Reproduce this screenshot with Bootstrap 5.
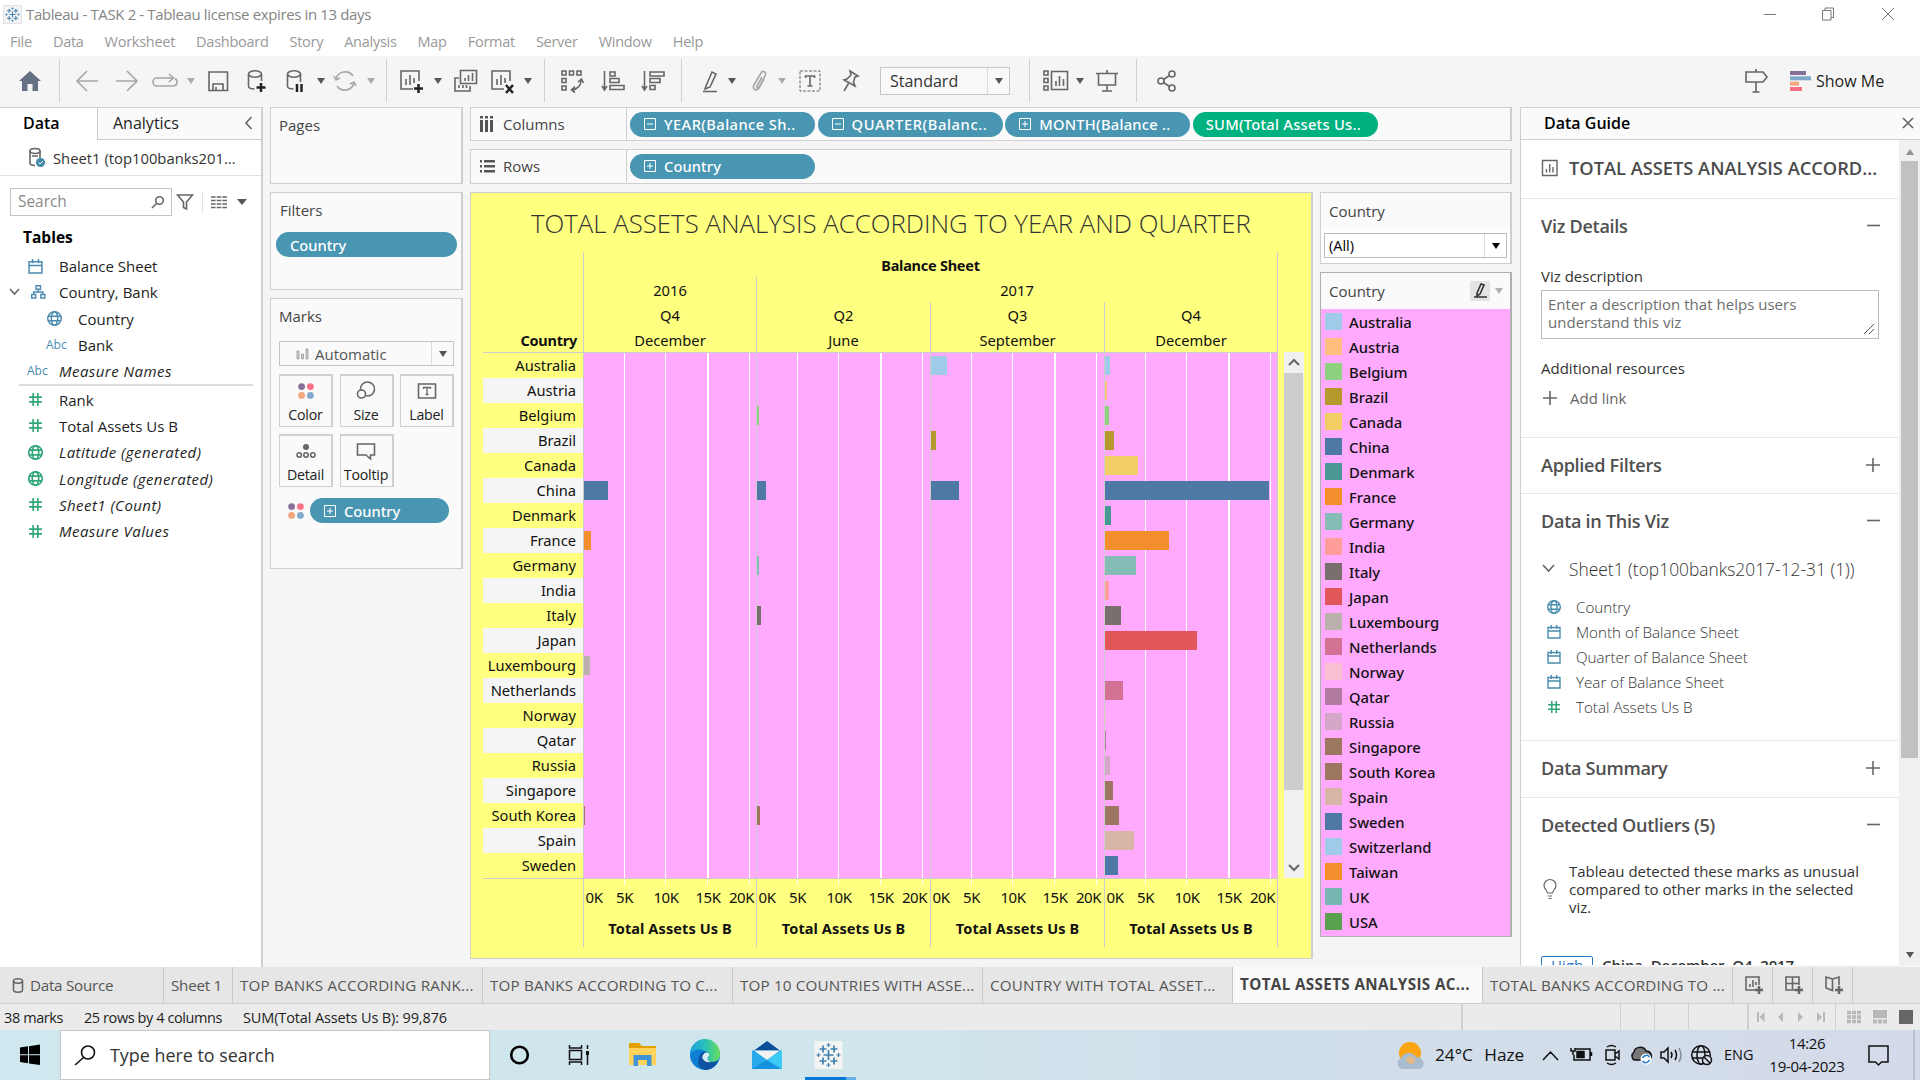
<!DOCTYPE html>
<html lang="en">
<head>
<meta charset="utf-8">
<title>Tableau - TASK 2</title>
<link rel="stylesheet" href="https://cdn.jsdelivr.net/npm/bootstrap@5.3.0/dist/css/bootstrap.min.css">
<script src="https://cdn.jsdelivr.net/npm/bootstrap@5.3.0/dist/js/bootstrap.bundle.min.js"></script>
<style>
body{width:1920px;height:1080px;overflow:hidden;background:#f5f5f5;font-family:"Open Sans","Noto Sans",sans-serif;font-size:15px;line-height:18px;color:#1e1e1e}
svg{display:block;flex:none;overflow:visible}
.ln{fill:none;stroke:#666;stroke-width:1.6}
.ttl{height:28px;color:#858585;font-size:15px;letter-spacing:-.37px;padding-left:3px}
.menubar{height:28px;color:#999;font-size:14.5px;padding:0 0 0 10px;gap:21px;letter-spacing:-.27px}
.tools{height:51px;background:#f5f5f5;display:grid;padding:0 0 2px 8px;align-items:center;justify-items:center;
grid-template-columns:44px 15px 40px 40px 36px 16px 38px 40px 36px 16px 32px 20px 11px 38px 16px 38px 36px 16px 16px 40px 41px 40px 16px 35px 20px 30px 16px 40px 40px 150px 19px 34px 14px 40px 18px 42px 1fr 40px 144px}
.tools>i{width:1px;height:43px;background:#d0d0d0}
.car{width:0;height:0;border:4px solid transparent;border-top:6px solid #555;border-bottom:0;display:block}
.pale{opacity:.45}
.stdbox{width:130px;height:28px;border:1px solid #c6c6c6;background:#f9f9f9;font-size:16px;color:#333;padding-left:9px}
.cut{border-left:1px solid #dcdcdc;height:100%;width:22px}
.main{height:860px}
.left{width:263px;background:#fff;border-right:2px solid #cfcfcf;border-top:1px solid #cfcfcf}
.tabrow{height:32px;font-size:16px}
.tabrow>div{padding-bottom:2px}
.tabrow>.t1{width:97px;padding-left:23px;font-weight:600;color:#000}
.tabrow>.t2{background:#fafafa;border-left:1px solid #ccc;border-bottom:1px solid #ccc;padding:0 9px 1px 15px}
.dsrow{height:36px;border-bottom:1px solid #e0e0e0;padding-left:29px;gap:8px;font-size:14.8px;color:#333}
.srow{height:52px;padding-left:10px}
.sbox{width:162px;height:28px;border:1px solid #c4c4c4;padding:0 7px 0 7px;color:#8a8a8a;font-size:15.4px}
.fld{height:26.3px;gap:0;color:#1e1e1e}
.fld>.ic{width:59px;padding-left:28px;display:flex}
.fld.sub>.ic{width:78px;padding-left:47px}
.fld>.fst-italic{letter-spacing:.45px}
.abc{font-size:12px;color:#4a8cae;margin-left:-1px}
.bl{stroke:#4a8cae;fill:none;stroke-width:1.4}
.gr{stroke:#2fa678;fill:none;stroke-width:1.5}
.mid{width:193px;margin-left:7px}
.box1{background:#fafafa;border:1px solid #cfcfcf;border-right-width:2px;color:#444}
.pill{background:#4996b2;color:#fff;border-radius:13px;height:25px;font-family:"Noto Sans";font-weight:500;font-size:14.7px;display:flex;align-items:center;white-space:nowrap}
.s1{letter-spacing:.1px}.s2{letter-spacing:.25px}.s3{letter-spacing:.42px}.s4{letter-spacing:.6px}
.mbtn{width:54px;height:53px;border:1px solid #cfcfcf;border-right-width:2px;border-top-width:2px;color:#222;display:flex;flex-direction:column;align-items:center;padding-top:5px;font-size:14.2px;letter-spacing:-.2px}
.mbtn svg{margin-bottom:5px}
.auto{width:175px;height:25px;border:1px solid #c6c6c6;color:#555;background:#fafafa}
.shelves{width:1042px;margin-left:7px}
.shelf{height:34px;display:flex;align-items:center}
.shelf>.lab{width:156px;height:100%;border-right:1px solid #cfcfcf;padding-left:9px;gap:10px}
.shelf .pill{width:185px;padding-left:14px;gap:8px;margin-left:3px}
.shelf .pill+.pill{margin-left:2.6px}
.viz{width:843px;height:767px;background:#ffff80;border:1px solid #cfcfcf;border-right-width:2px;font-family:"Noto Sans";color:#111;padding:0 33px 0 12px;position:relative}
.viz h1{font-family:"Open Sans";font-weight:300;font-size:25.8px;line-height:61px;height:59px;margin:0 -33px 0 -12px;text-align:center;color:#333;white-space:nowrap}
.vgrid{display:grid;grid-template-columns:100px 173px 174px 174px 174px;font-size:14.7px;text-align:center}
.vhead{grid-auto-rows:25px;line-height:27px}
.hd{border-left:1px solid #ccc}
.hr1{border-right:1px solid #ccc}
.vbody{height:526px;border-top:1px solid #ccc}
.names>div{height:25px;text-align:right;padding-right:7px;line-height:24px;font-size:14.7px}
.names>div:nth-child(even){background:#f5f5f5}
.pane{background-color:#ffaaff;border-left:1px solid #ccc;background-image:linear-gradient(90deg,transparent 40px,#fff 40px,#fff 41px,transparent 41px,transparent 81px,#fff 81px,#fff 82px,transparent 82px,transparent 123px,#fff 123px,#fff 125px,transparent 125px,transparent 165px,#fff 165px,#fff 166px,transparent 166px)}
.pane>div{height:25px;padding-top:3px}
.pane>div>div{height:19px}
.axis{border-left:1px solid #ccc;border-top:1px solid #ccc;height:69px}
.axis:last-child,.pane:last-child{border-right:1px solid #ccc}
.ticks{height:40px;font-size:15px;line-height:37px;display:grid;grid-template-columns:20px 41px 42px 42px 25px;letter-spacing:-.4px;background:linear-gradient(#fff,#fff) 40px 0/1px 6px no-repeat,linear-gradient(#fff,#fff) 81px 0/1px 6px no-repeat,linear-gradient(#fff,#fff) 123px 0/1px 6px no-repeat,linear-gradient(#fff,#fff) 165px 0/1px 6px no-repeat}
.ticks>span{display:flex;justify-content:center}
.vb{font-weight:700;font-size:14.5px;letter-spacing:-.25px}
.axis .vb{letter-spacing:.1px}
.vsb{position:absolute;left:813px;top:159px;width:20px;height:526px;background:#f0f0f0}
.vsb>div{height:417px;background:#cdcdcd;margin-right:1px}
.rcards{width:192px;margin-left:7px}
.lg{background:#ffaaff;padding:0 0 0 4px;font-family:"Noto Sans";font-weight:500;color:#111;font-size:14.8px}
.lg>div{height:25px;display:flex;align-items:center;gap:7px}
.lg i{width:17px;height:17px;margin-top:-1px}
.guide{width:400px;margin-left:8px;border-left:1px solid #cfcfcf;border-top:1px solid #cfcfcf;border-bottom:2px solid #f5f5f5;background:#fff;color:#333}
.ghead{height:32px;background:#fafafa;border-bottom:1px solid #cfcfcf;padding:0 7px 2px 23px;font-size:16px;font-weight:600;color:#000}
.gbody{width:378px;overflow:hidden}
.gsec{border-bottom:1px solid #e8e8e8;padding:0 19px 0 20px}
.gh{height:55px;padding-bottom:2px;font-size:18.1px;font-weight:600;color:#505050;display:flex;align-items:center;justify-content:space-between;letter-spacing:-.3px}
.gi{height:25px;display:flex;align-items:center;gap:15px;padding-left:6px;color:#333;font-weight:300;font-size:15.2px}
.gsb{width:21px;background:#f0f0f0}
.strip{height:37px;background:#e6e6e6;border-bottom:1px solid #cfcfcf;color:#555;font-size:15.2px}
.strip>div{border-right:1px solid #c8c8c8;display:flex;align-items:center;padding-left:7px;white-space:nowrap;letter-spacing:-.25px}
.strip>.wd{width:250px;letter-spacing:.17px}
.strip>.act{letter-spacing:.38px;background:#fafafa;color:#444;padding-bottom:2px}
.strip>.ico{width:40px;padding-left:12px}
.stat{height:26px;background:#ebebeb;font-size:14.5px}
.stat span{padding-top:2px}
.stat i{width:2px;height:26px;background:#d0d0d0}
.task{height:50px;background:linear-gradient(90deg,#cfe7ee 0,#d0e5ec 45%,#d0dfea 65%,#d4dae9 100%);color:#111;font-size:17.9px}
.tsearch{width:430px;height:50px;background:#fff;border:1px solid #c8c8c8;padding-left:14px;gap:14px;color:#333}
</style>
</head>
<body>
<svg width="0" height="0" style="position:absolute"><defs>
<symbol id="cal" viewBox="0 0 14 14"><path d="M1 2.500h12v10.500H1zM1 6h12M4.300 0v4M9.700 0v4"/></symbol>
<symbol id="globe" viewBox="0 0 14 14"><circle cx="7" cy="7" r="6.300"/><ellipse cx="7" cy="7" rx="3" ry="6.300"/><path d="M1.300 4.800h11.400M1.300 9.200h11.400"/></symbol>
<symbol id="hash" viewBox="0 0 14 14"><path d="M4.800 1v12M9.200 1v12M1 4.800h12M1 9.200h12"/></symbol>
<symbol id="minusbox" viewBox="0 0 12 12"><path d="M.5.5h11v11H.5zM3 6h6" fill="none" stroke="#fff"/></symbol>
<symbol id="plusbox" viewBox="0 0 12 12"><path d="M.5.5h11v11H.5zM3 6h6M6 3v6" fill="none" stroke="#fff"/></symbol>
<symbol id="dots" viewBox="0 0 16 16"><circle cx="3.600" cy="3.600" r="3.400" fill="#8a7099"/><circle cx="12.400" cy="3.600" r="3.400" fill="#fa7085"/><circle cx="3.600" cy="12.400" r="3.400" fill="#f4a77c"/><circle cx="12.400" cy="12.400" r="3.400" fill="#83a9cd"/></symbol>
<symbol id="tab" viewBox="0 0 28 28"><path d="M0 0h28v28H0z" fill="#f4f4f4"/><path d="M14 9v10M9 14h10M8.500 4.500v7M5 8h7M19.500 4.500v7M16 8h7M8.500 16.500v7M5 20h7M19.500 16.500v7M16 20h7" stroke="#3f81b1" stroke-width="1.700"/><path d="M14 2v4M12 4h4M14 22v4M12 24h4M4 12v4M2 14h4M24 12v4M22 14h4" stroke="#3f81b1" stroke-width="1.200"/></symbol>
</defs></svg>

<header class="bg-white">
<div class="ttl d-flex align-items-center"><svg class="border" width="19" height="19"><use href="#tab"/></svg><span class="ms-1 flex-grow-1">Tableau - TASK 2 - Tableau license expires in 13 days</span>
<svg width="132" height="14" class="me-4" fill="none" stroke="#777"><path d="M0 7.500h12M58.500 3.500h8.500v9.500h-8.500zM61 3.500V1h8.500v9.500H67M118 1l12 12M130 1l-12 12"/></svg></div>
<nav class="menubar d-flex align-items-center"><span>File</span><span>Data</span><span>Worksheet</span><span>Dashboard</span><span>Story</span><span>Analysis</span><span>Map</span><span>Format</span><span>Server</span><span>Window</span><span>Help</span></nav>
</header>

<div class="tools">
<svg width="22" height="20"><path d="M11 0L0 10h3v10h5.500v-7h5v7H19V10h3z" fill="#667085"/></svg><i></i>
<svg class="ln" width="22" height="20" opacity=".55"><path d="M22 10H1M11 0L1 10l10 10"/></svg>
<svg class="ln" width="22" height="20" opacity=".55"><path d="M0 10h21M11 0l10 10-10 10"/></svg>
<svg class="ln" width="26" height="14" opacity=".55"><path d="M21 4H5a4 4 0 0 0 0 8h16a4 4 0 0 0 2-7.500M17 0l4.500 4-4.500 4"/></svg><b class="car pale"></b>
<svg class="ln" width="20" height="20"><path d="M1 1h18.500v18.500H1zM5 19v-6h10v6M8 19v-3"/></svg>
<svg class="ln" width="20" height="22"><ellipse cx="8" cy="4" rx="6.500" ry="3.200"/><path d="M1.500 4v12c0 2 3 3 6 3M14.500 4v7"/><path d="M9.500 17.500h9M14 13v9" stroke="#222" stroke-width="2.500"/></svg>
<svg class="ln" width="20" height="22"><ellipse cx="9" cy="4" rx="6.500" ry="3.200"/><path d="M2.500 4v12c0 2 3 3 6 3M15.500 4v8"/><path d="M12 14v8M16.500 14v8" stroke="#222" stroke-width="2.500"/></svg><b class="car"></b>
<svg class="ln" width="22" height="22" opacity=".55"><path d="M2 9a9.500 9.500 0 0 1 17-3M20 13a9.500 9.500 0 0 1-17 3M0 6l2 4 4-2M22 16l-2-4-4 2"/></svg><b class="car pale"></b><i></i>
<svg class="ln" width="24" height="24"><path d="M14 20H2V2h18v10M7 16V10M11 16V6M15 14V9"/><path d="M15 19.500h9M19.500 15v9" stroke="#222" stroke-width="2.500"/></svg><b class="car"></b>
<svg class="ln" width="23" height="24"><path d="M6.500 1.500h16v13h-16zM11 12V9M14.500 12V6M18.500 12V4M5 9H1v13h15v-5M5 19v-3M9 19v-3M12.500 19v-3"/></svg>
<svg class="ln" width="24" height="24"><path d="M14 20H2V2h18v10M7 16V10M11 16V6M15 14V9"/><path d="M16 16l7 8M23 16l-7 8" stroke="#222" stroke-width="2.500"/></svg><b class="car"></b><i></i>
<svg class="ln" width="22" height="22"><path d="M1 1h4v4H1zM8.500 1h4v4h-4zM16 1h4v4h-4zM1 8.500h4v4H1zM1 16h4v4H1zM20 10c0 6-3 9-9 10M17 12l3.500-3 2 4M14 16.500L10.500 20l3.500 2.500"/></svg>
<svg class="ln" width="22" height="22"><path d="M2.500 1v18M0 16l2.500 4L5 16M8 2h5v4H8zM8 8.500h9v4H8zM8 15.500h14v4H8z"/></svg>
<svg class="ln" width="22" height="22"><path d="M2.500 1v18M0 16l2.500 4L5 16M8 2h14v4H8zM8 8.500h10v4H8zM8 15.500h5v4H8z"/></svg><i></i>
<svg class="ln ms-2" width="15" height="22"><path d="M3 16L9 2l4 2-6 13-5 2zM0 21.500h14"/></svg><b class="car me-1"></b>
<svg class="ln" width="15" height="20" opacity=".55"><path d="M10 6L5 15c-1 2 1 3 2 1l6-11c2-4-2-6-4-3L2 14c-2 4 2 7 5 3l5-9"/></svg><b class="car pale"></b>
<svg class="ln" width="22" height="22"><path d="M1 1h20v20H1z" stroke-dasharray="3 1.500" stroke-width="1"/><path d="M6.500 8V6h9v2M11 6v10M8.500 16h5"/></svg>
<svg class="ln" width="17" height="22"><path d="M8 1l8 5-3 1-1.500 5 1.500 4L2 10l3-1 4-4zM6.500 13.500L2 21"/></svg>
<div class="stdbox d-flex align-items-center justify-content-between">Standard<span class="cut d-flex align-items-center justify-content-center"><b class="car"></b></span></div><i></i>
<svg class="ln" width="26" height="22"><path d="M1 1h4v4H1zM1 8.500h4v4H1zM1 16h4v4H1zM8.500 1.500h16v18h-16zM13 16v-5M16.500 16V6M20.500 16V9"/></svg><b class="car"></b>
<svg class="ln" width="22" height="22"><path d="M0 3.500h22M2.500 4v11h17V4M11 0v3M11 15v6M6 21h10"/></svg><i></i>
<svg class="ln" width="19" height="22"><circle cx="4" cy="11" r="3"/><circle cx="15" cy="4" r="3"/><circle cx="15" cy="18" r="3"/><path d="M6.500 9.500l6-4M6.500 12.500l6 4"/></svg><span></span>
<svg class="ln" width="23" height="24"><path d="M1 3h17l4 5-4 5H1zM11 0v3M11 13v10M7.500 23h7"/></svg>
<div class="d-flex align-items-center w-100 ps-3"><svg width="21" height="20" style="margin-left:-2px"><path d="M0 0h16v4H0z" fill="#86709a"/><path d="M0 5.300h21v4H0z" fill="#7fa6cb"/><path d="M0 10.600h9v4H0z" fill="#f4a77c"/><path d="M0 16h12v4H0z" fill="#fa7085"/></svg><span class="fs-6" style="margin-left:5px">Show Me</span></div>
</div>

<div class="main d-flex">
<aside class="left">
<div class="tabrow d-flex"><div class="t1 d-flex align-items-center">Data</div><div class="t2 flex-grow-1 d-flex align-items-center justify-content-between">Analytics<svg class="ln" width="7" height="12"><path d="M6.500 0L1 6l5.500 6"/></svg></div></div>
<div class="dsrow d-flex align-items-center"><svg class="ln" width="16" height="19"><ellipse cx="6" cy="3" rx="5" ry="2.500"/><path d="M1 3v12c0 1.500 2 2.500 5 2.500M11 3v7M3 8h6"/><circle cx="11.500" cy="14.500" r="4.500" fill="#3e88aa" stroke="none"/><path d="M9.500 14.500l1.500 1.500 3-3" stroke="#fff" stroke-width="1"/></svg><span>Sheet1 (top100banks201...</span></div>
<div class="srow d-flex align-items-center"><div class="sbox d-flex align-items-center justify-content-between">Search<svg class="ln" width="12" height="12"><circle cx="7.500" cy="4.500" r="3.800"/><path d="M4.500 7.500L0 12"/></svg></div>
<svg class="ln ms-1" width="18" height="16"><path d="M1.500 1h15L10.500 8v7l-3-1.500V8z"/></svg><span class="border-start ms-2 me-2" style="height:22px"></span><svg width="16" height="12" class="ln"><path d="M0 1h16M0 4.500h16M0 8h16M0 11.500h16" stroke-dasharray="4.600 1.100"/></svg><b class="car" style="margin-left:10px;border-width:6px 5px 0"></b></div>
<div class="fw-bold text-black" style="height:24px;padding-left:23px;font-size:15.500px">Tables</div>
<div id="fields" style="padding-top:1px"></div>
</aside>

<div class="mid">
<section class="box1 px-2 pt-2" style="height:77px">Pages</section>
<section class="box1 pt-2 mt-2" style="height:98px;padding-left:5px"><div class="ms-1 mb-3 pb-0">Filters</div><div class="pill" style="width:181px;padding-left:14px;margin-top:-3px">Country</div></section>
<section class="box1 px-2 mt-2" style="height:271px;padding-top:8px"><div>Marks</div>
<div class="auto d-flex align-items-center" style="margin-top:16px"><svg width="13" height="12" class="ms-3"><path d="M1 3h2v8H1zM5.500 6h2v5h-2zM10 1h2v10h-2z" fill="#ccc" stroke="#999" stroke-width=".8"/></svg><span class="flex-grow-1" style="padding-left:6px">Automatic</span><span class="cut d-flex align-items-center justify-content-center"><b class="car"></b></span></div>
<div class="d-flex flex-wrap mt-2" style="gap:7px 6.500px;width:178px">
<div class="mbtn"><svg width="16" height="20"><use href="#dots" width="16" height="20"/></svg>Color</div>
<div class="mbtn"><svg class="ln" width="18" height="20"><circle cx="10.500" cy="8" r="7"/><circle cx="4.500" cy="13" r="4" fill="#fafafa"/></svg>Size</div>
<div class="mbtn"><svg class="ln" width="18" height="20"><path d="M.5 3h17v14H.5z"/><path d="M5.500 8V6.500h7V8M9 6.500v7M7.500 13.500h3" stroke-width="1.300"/></svg>Label</div>
<div class="mbtn"><svg class="ln" width="20" height="20"><circle cx="10" cy="6" r="3" fill="#666" stroke="none"/><circle cx="3.200" cy="14" r="2.200"/><circle cx="10" cy="14" r="2.200"/><circle cx="16.800" cy="14" r="2.200"/></svg>Detail</div>
<div class="mbtn"><svg class="ln" width="18" height="20"><path d="M.5 3h17v11h-4v4l-4.500-4H.5z"/></svg>Tooltip</div></div>
<div class="d-flex align-items-center" style="margin:11px 0 0 9px;gap:6px"><svg width="16" height="16"><use href="#dots"/></svg><div class="pill" style="width:139px;padding-left:14px;gap:8px"><svg width="12" height="12"><use href="#plusbox"/></svg>Country</div></div>
</section>
</div>

<div class="shelves">
<div class="box1 shelf"><div class="lab d-flex align-items-center"><svg width="13" height="16"><path d="M0 0h3v2.500H0zM5 0h3v2.500H5zM10 0h3v2.500h-3zM0 4h3v12H0zM5 4h3v12H5zM10 4h3v12h-3z" fill="#555"/></svg>Columns</div>
<div class="pill s3"><svg width="12" height="12"><use href="#minusbox"/></svg>YEAR(Balance Sh..</div><div class="pill s4"><svg width="12" height="12"><use href="#minusbox"/></svg>QUARTER(Balanc..</div><div class="pill s2"><svg width="12" height="12"><use href="#plusbox"/></svg>MONTH(Balance ..</div><div class="pill s2" style="background:#00b180;padding-left:13px">SUM(Total Assets Us..</div></div>
<div class="box1 shelf mt-2" style="height:35px;padding-bottom:1px"><div class="lab d-flex align-items-center"><svg width="15" height="13"><path d="M0 0h2v2.500H0zM4 0h11v2.500H4zM0 5h2v2.500H0zM4 5h11v2.500H4zM0 10h2v2.500H0zM4 10h11v2.500H4z" fill="#555"/></svg><span style="margin-left:-2px">Rows</span></div><div class="pill s1"><svg width="12" height="12"><use href="#plusbox"/></svg>Country</div></div>
<div class="d-flex mt-2">
<div class="viz"><h1>TOTAL ASSETS ANALYSIS ACCORDING TO YEAR AND QUARTER</h1>
<div class="vgrid vhead">
<div></div><div class="hd hr1 vb" style="grid-column:2/6">Balance Sheet</div>
<div></div><div class="hd">2016</div><div class="hd hr1" style="grid-column:3/6">2017</div>
<div></div><div class="hd">Q4</div><div class="hd">Q2</div><div class="hd">Q3</div><div class="hd hr1">Q4</div>
<div class="vb text-end" style="padding-right:6px">Country</div><div class="hd">December</div><div class="hd">June</div><div class="hd">September</div><div class="hd hr1">December</div></div>
<div class="vgrid"><div class="names vbody" id="names"></div><div class="pane vbody"></div><div class="pane vbody"></div><div class="pane vbody"></div><div class="pane vbody"></div></div>
<div class="vgrid" id="axes"><div style="border-top:1px solid #ccc"></div></div>
<div class="vsb d-flex flex-column align-items-stretch"><svg class="ln mx-auto" width="10" height="21"><path d="M0 13l5-5 5 5" stroke-width="2"/></svg><div></div><svg class="ln mx-auto mt-auto" width="10" height="21"><path d="M0 8l5 5 5-5" stroke-width="2"/></svg></div>
</div>
<div class="rcards">
<div class="box1" style="height:72px"><div class="px-2 d-flex align-items-center" style="height:36px;padding-bottom:1px">Country</div><div class="bg-white d-flex justify-content-center" style="height:34px;padding-top:4px"><div class="border d-flex align-items-center text-black" style="width:183px;height:25px;border-color:#bbb!important;padding-left:4px"><span class="flex-grow-1" style="font-size:14.500px">(All)</span><span class="cut d-flex align-items-center justify-content-center"><b class="car" style="border-top-color:#000"></b></span></div></div></div>
<div class="box1 mt-2" style="height:665px;border-color:#b0b0b0"><div class="ps-2 d-flex align-items-center" style="height:36px;padding-bottom:1px"><span class="flex-grow-1">Country</span><span class="d-flex align-items-center justify-content-center" style="width:20px;height:20px;background:#e4e4e4"><svg class="ln" width="13" height="14"><path d="M3 9L7 0l3 1-4 9-3 2zM0 13h13" stroke="#333"/></svg></span><b class="car pale" style="margin:0 7px 0 5px"></b></div><div class="lg" id="lg" style="height:627px"></div></div>
</div>
</div>
</div>

<aside class="guide">
<div class="ghead d-flex align-items-center justify-content-between">Data Guide<svg class="ln" width="10" height="10"><path d="M0 0l10 10M10 0L0 10"/></svg></div>
<div class="d-flex" style="height:825px"><div class="gbody">
<div class="gsec d-flex align-items-center" style="height:59px;padding-bottom:2px;font-size:18.250px;color:#4a4a4a;gap:11px"><svg class="ln" width="17" height="16"><path d="M1.500 .5H16v15H1.500zM5.500 12.500V9M8.700 12.500V4M12 12.500V7" stroke-width="1.400"/></svg><span class="text-nowrap fw-semibold">TOTAL ASSETS ANALYSIS ACCORD...</span></div>
<div class="gsec" style="height:239px"><div class="gh">Viz Details<svg class="ln me-0" width="13" height="13"><path d="M0 6.500h13"/></svg></div><div style="margin-top:13px">Viz description</div><div class="position-relative" style="border:1px solid #bbb;height:49px;margin:5px 1px 0 0;padding:4px 6px;color:#6e6e6e;line-height:18px;letter-spacing:.02px">Enter a description that helps users<br>understand this viz<svg class="position-absolute bottom-0 end-0 m-1" width="10" height="10" stroke="#555"><path d="M0 10L10 0M5 10l5-5"/></svg></div><div style="margin-top:20px">Additional resources</div><div class="d-flex align-items-center" style="margin-top:12px;gap:13px;color:#666;padding-left:2px"><svg class="ln" width="14" height="14"><path d="M7 0v14M0 7h14"/></svg>Add link</div></div>
<div class="gsec"><div class="gh">Applied Filters<svg class="ln" width="14" height="14"><path d="M7 0v14M0 7h14"/></svg></div></div>
<div class="gsec" style="height:247px"><div class="gh">Data in This Viz<svg class="ln" width="13" height="13"><path d="M0 6.500h13"/></svg></div><div class="d-flex align-items-center" style="height:40px;padding-left:2px;gap:15px;font-size:17.400px;font-weight:300;color:#333"><svg class="ln" width="11" height="8"><path d="M0 0l5.500 6L11 0"/></svg><span class="text-nowrap">Sheet1 (top100banks2017-12-31 (1))</span></div><div id="gi" style="padding-top:5px"></div></div>
<div class="gsec" style="height:57px"><div class="gh">Data Summary<svg class="ln" width="14" height="14"><path d="M7 0v14M0 7h14"/></svg></div></div>
<div class="gsec border-0"><div class="gh">Detected Outliers (5)<svg class="ln" width="13" height="13"><path d="M0 6.500h13"/></svg></div>
<div class="d-flex align-items-center" style="gap:12px;margin-top:9px;padding-left:2px;line-height:18px"><svg class="ln" width="14" height="20"><path d="M4.500 14C4 11 1 10 1 6.500a6 6 0 0 1 12 0C13 10 10 11 9.500 14zM5 17h4M5.500 19.500h3" stroke-width="1.200"/></svg><span>Tableau detected these marks as unusual<br>compared to other marks in the selected<br>viz.</span></div>
<div class="d-flex" style="margin-top:40px;gap:9px"><span class="text-center" style="width:52px;border:1px solid #2a77c4;color:#2a77c4;line-height:17px;border-radius:2px">High</span><span class="fw-semibold" style="letter-spacing:-.1px">China, December, Q4, 2017</span></div></div>
</div><div class="gsb ms-auto d-flex flex-column align-items-center"><b class="car" style="transform:rotate(180deg);margin:9px 0 6px;opacity:.6"></b><div style="width:17px;height:597px;background:#c1c1c1"></div><b class="car mt-auto" style="margin-bottom:7px"></b></div></div>
</aside>
</div>

<div class="strip d-flex"><div style="width:164px;padding-left:12px;gap:6px"><svg class="ln" width="12" height="15"><ellipse cx="6" cy="3" rx="4.500" ry="2.200"/><path d="M1.500 3v9c0 3 9 3 9 0V3"/></svg>Data Source</div><div style="width:69px">Sheet 1</div><div class="wd">TOP BANKS ACCORDING RANK...</div><div class="wd">TOP BANKS ACCORDING TO C...</div><div class="wd">TOP 10 COUNTRIES WITH ASSE...</div><div class="wd">COUNTRY WITH TOTAL ASSET...</div><div class="wd act fw-bold">TOTAL ASSETS ANALYSIS AC...</div><div class="wd">TOTAL BANKS ACCORDING TO ...</div>
<div class="ico"><svg class="ln" width="18" height="18"><path d="M10 14H1V1h13v8M5 11V8M8 11V4M11 9V6"/><path d="M10 14h8M14 10v8" stroke-width="2.500"/></svg></div><div class="ico"><svg class="ln" width="18" height="18"><path d="M10 14H1V1h13v8M7.500 1v13M1 7.500h13"/><path d="M10 14h8M14 10v8" stroke-width="2.500"/></svg></div><div class="ico"><svg class="ln" width="18" height="18"><path d="M7.500 3L1 1v11l6.500 2.500V3L14 1v8"/><path d="M10 14h8M14 10v8" stroke-width="2.500"/></svg></div></div>
<div class="stat d-flex align-items-center" style="padding-left:4px"><span style="width:80px;letter-spacing:-.4px">38 marks</span><span style="width:159px;letter-spacing:-.42px">25 rows by 4 columns</span><span style="width:1218px;letter-spacing:-.13px">SUM(Total Assets Us B): 99,876</span><i></i><i style="margin-left:157px;width:1px"></i><i style="margin-left:33px;width:1px"></i><i style="margin-left:33px;width:1px"></i><i style="margin-left:58px"></i>
<svg width="68" height="10" style="margin-left:8px" fill="#b8b8b8"><path d="M0 0h2v10H0zM7.500 0v10L2.500 5zM26 0v10L21 5zM41 0v10l5-5zM60 0v10l5-5zM66 0h2v10h-2z"/></svg><i style="margin-left:10px;width:1px"></i>
<svg width="66" height="14" style="margin-left:11px"><path d="M0 2.500h14M0 7h14M0 11.500h14" stroke="#b8b8b8" stroke-width="3.500" stroke-dasharray="4 1"/><path d="M26 0h14v8H26z" fill="#b8b8b8"/><path d="M26 11.500h14" stroke="#b8b8b8" stroke-width="4" stroke-dasharray="4 1"/><path d="M52 0h14v14H52z" fill="#666"/></svg></div>

<footer class="task d-flex align-items-center position-relative">
<svg width="60" height="50"><path d="M20 17.500l8-1.200v8H20zM29 16.200l11-1.700v9.800H29zM20 25.300h8v8l-8-1.200zM29 25.300h11V35l-11-1.600z"/></svg>
<div class="tsearch d-flex align-items-center"><svg width="21" height="21" fill="none" stroke="#111" stroke-width="1.600"><circle cx="13" cy="7.500" r="6.500"/><path d="M8.500 12.500L0 20"/></svg><span>Type here to search</span></div>
<svg width="371" height="50"><circle cx="29.500" cy="25" r="8.300" fill="none" stroke="#000" stroke-width="2.600"/>
<g fill="none" stroke="#111" stroke-width="1.500"><path d="M79.500 15v3h12v-3M79.500 20.500h12v9h-12zM79.500 35v-3h12v3M97.500 15v4M97.500 25v10"/><path d="M96 21h3v4h-3z" fill="#111" stroke="none"/></g>
<path d="M139 13h10l3 3h14v18h-27z" fill="#e3a000"/><path d="M139 18h27v17h-27z" fill="#ffd35a"/><path d="M143.500 36v-11h18v11h-4.500v-6h-9v6z" fill="#3f94d8"/>
<defs><linearGradient id="eg" x1="0" x2="1"><stop offset="0" stop-color="#1a9fe0"/><stop offset=".55" stop-color="#2cc3b4"/><stop offset="1" stop-color="#6bdc55"/></linearGradient></defs>
<circle cx="215" cy="25" r="15" fill="#0f7fd6"/><path d="M200 24a15 15 0 0 1 30 0c0 6-4 8-8 8-5 0-5-3-3-5 1-6-11-12-19-3z" fill="url(#eg)"/><path d="M209 27c2-6 8-7 10-2-5 4-1 9 9 6-2 6-8 9-13 9-7-1-8-9-6-13z" fill="#0c52a0"/><path d="M213 25c2-4 7-3 6 1-3 3-1 5 2 6-7 1-10-4-8-7z" fill="#d6eef2"/>
<path d="M262 22l15-11 15 11z" fill="#0b4f98"/><path d="M262 20.500h30V39h-30z" fill="#29a8ea"/><path d="M264 20.500h26L277 30z" fill="#f2f2f2"/><path d="M277 30l15-9.500V39z" fill="#3ccbf5"/><path d="M262 39l15-9 13 9z" fill="#1592df"/>
<svg x="324" y="11" width="29" height="28"><use href="#tab"/></svg><path d="M315 47h41v3h-41z" fill="#0078d7"/><path d="M356 47h10v3h-10z" fill="#69b0e6"/></svg>
<div class="flex-grow-1"></div>
<svg width="28" height="28"><circle cx="14" cy="12" r="11" fill="#fba414"/><path d="M6 28a6 6 0 0 1-1-11c2-5 10-8 15-1 9 0 10 11 3 12z" fill="#a9bccf"/><path d="M10 18c2-4 8-3 9 1 1 5-8 6-9-1z" fill="#e3b889"/></svg>
<span style="width:119px;padding-left:11px;word-spacing:7px;font-size:17.200px">24°C Haze</span>
<svg width="180" height="50" fill="none" stroke="#111" stroke-width="1.500"><path d="M0 30l7.500-8 7.500 8M32 19h15v11H31v-5M48.500 22v4M28 18v3h4v-3M30 21v4"/><path d="M34 21.500h7v6h-7z" fill="#111"/><path d="M63 20h9v10h-9zM72 24l4-3v8l-4-3M64 17c3-2 6-2 9 0M64 33c3 2 6 2 9 0"/><path d="M91 30a5 5 0 0 1 0-8c1-6 10-6 12-1 5 0 7 5 4 9z" fill="#777"/><circle cx="103" cy="29" r="5.500" fill="#fff" stroke="none"/><path d="M99.500 28a4 4 0 0 1 7-1M106.500 30a4 4 0 0 1-7 1" stroke="#1b78c8"/><path d="M118 22h3l4-4v14l-4-4h-3zM128 22q2 3 0 6M132 20q3 5 0 10"/><path d="M136 18q4 7 0 14" opacity=".4"/><circle cx="158" cy="25" r="9.300"/><ellipse cx="158" cy="25" rx="4" ry="9.300"/><path d="M149 22h18M149 28h18"/><circle cx="164" cy="30" r="4.500" fill="#d4dce9"/><path d="M161 27l6 6"/></svg>
<span style="font-size:14.500px;width:44px;padding-left:1px">ENG</span>
<div class="text-center" style="width:80px;font-size:15px;line-height:23px;letter-spacing:-.3px;margin-right:20px">14:26<br>19-04-2023</div>
<svg width="53" height="50" fill="none" stroke="#111" stroke-width="1.500"><path d="M2 16h19v16h-6.500l-3 3-3-3H2z"/><path d="M47 0v50" stroke="#9aa6b6" stroke-width="1"/></svg>
</footer>

<script>
// Side pane fields: [icon, label, italic, indented]
const ic=(n,c,s=15)=>`<svg class="${c}" width="${s}" height="${s}"><use href="#${n}"/></svg>`;
const abc='<span class="abc">Abc</span>';
const tree='<svg class="bl" width="14" height="14"><path d="M5 .7h4.500v3.500H5zM.7 9.500h4v3.500h-4zM9.800 9.500h4v3.500h-4zM7.200 4v3M2.700 9.500V7h9.200v2.500"/></svg>';
const rows=[[ic('cal','bl'),'Balance Sheet'],[tree,'Country, Bank'],[ic('globe','bl'),'Country',0,1],[abc,'Bank',0,1],[abc,'Measure Names',1],0,[ic('hash','gr'),'Rank'],[ic('hash','gr'),'Total Assets Us B'],[ic('globe','gr'),'Latitude (generated)',1],[ic('globe','gr'),'Longitude (generated)',1],[ic('hash','gr'),'Sheet1 (Count)',1],[ic('hash','gr'),'Measure Values',1]];
document.getElementById('fields').innerHTML=rows.map((r,i)=>r?`<div class="fld d-flex align-items-center ${r[3]?'sub':''}"><span class="ic align-items-center" ${i==1?'style="padding-left:10px;gap:12px"':''}>${i==1?'<svg class="ln" width="9" height="6"><path d="M0 0l4.500 5L9 0"/></svg>':''}${r[0]}</span><span class="${r[2]?'fst-italic':''}">${r[1]}</span></div>`:'<div style="height:2px;background:#ddd;margin:0 8px 0 19px"></div>').join('');
// Marks: country, colour, bar lengths by pane
const D=[['Australia','#a0cbe8',0,0,16,5],['Austria','#ffbe7d',0,0,0,2],['Belgium','#8cd17d',0,2,0,4],['Brazil','#b6992d',0,0,5,9],['Canada','#f1ce63',0,0,0,33],['China','#4e79a7',24,9,28,164],['Denmark','#499894',0,0,0,6],['France','#f28e2b',7,0,0,64],['Germany','#86bcb6',0,2,0,31],['India','#ff9d9a',0,0,0,4],['Italy','#79706e',0,4,0,16],['Japan','#e15759',0,0,0,92],['Luxembourg','#bab0ac',6,0,0,0],['Netherlands','#d37295',0,0,0,18],['Norway','#fabfd2',0,0,0,1],['Qatar','#b07aa1',0,0,0,1],['Russia','#d4a6c8',0,0,0,5],['Singapore','#9d7660',0,0,0,8],['South Korea','#9d7660',.5,3,0,14],['Spain','#d7b5a6',0,0,0,29],['Sweden','#4e79a7',0,0,0,13],['Switzerland','#a0cbe8'],['Taiwan','#f28e2b'],['UK','#76b7b2'],['USA','#59a14f']];
const S=D.slice(0,21);
document.getElementById('names').innerHTML=S.map(d=>`<div>${d[0]}</div>`).join('');
document.querySelectorAll('.pane').forEach((p,i)=>p.innerHTML=S.map(d=>`<div><div style="width:${d[i+2]}px;background:${d[1]}"></div></div>`).join(''));
document.getElementById('lg').innerHTML=D.map(d=>`<div><i style="background:${d[1]}"></i>${d[0]}</div>`).join('');
document.getElementById('axes').innerHTML+='<div class="axis"><div class="ticks"><span>0K</span><span>5K</span><span>10K</span><span>15K</span><span>20K</span></div><div class="vb">Total Assets Us B</div></div>'.repeat(4);
document.getElementById('gi').innerHTML=[['globe','bl','Country'],['cal','bl','Month of Balance Sheet'],['cal','bl','Quarter of Balance Sheet'],['cal','bl','Year of Balance Sheet'],['hash','gr','Total Assets Us B']].map(r=>`<div class="gi">${ic(r[0],r[1],14)}${r[2]}</div>`).join('');
</script>
</body>
</html>
